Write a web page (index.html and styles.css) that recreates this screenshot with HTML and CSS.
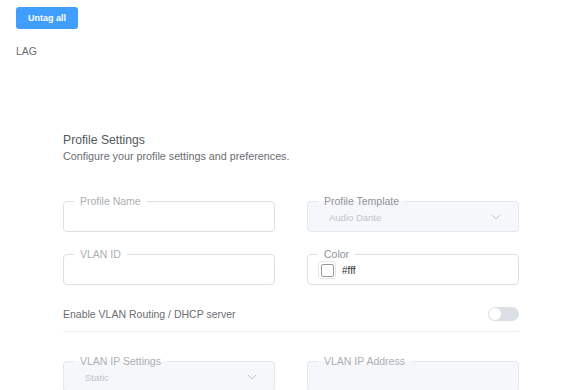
FILE: index.html
```html
<!DOCTYPE html>
<html lang="en">
<head>
    <meta charset="UTF-8">
    <meta name="viewport" content="width=device-width, initial-scale=1.0">
    <title>Profile Settings</title>
    <link rel="stylesheet" href="styles.css">
</head>
<body>

<!-- Top toolbar -->
<div class="toolbar">
    <button class="button">Untag all</button>
    <div class="lag-label">LAG</div>
</div>

<!-- Profile form -->
<div class="profile">
    <div class="profile-head">
        <h3>Profile Settings</h3>
        <p>Configure your profile settings and preferences.</p>
    </div>

    <div class="form-grid">
        <fieldset class="field">
            <legend>Profile Name</legend>
            <input type="text">
        </fieldset>

        <fieldset class="field disabled dark-label">
            <legend>Profile Template</legend>
            <div class="select">
                <span>Audio Dante</span>
                <svg width="10" height="6" viewBox="0 0 10 6"><path d="M1 1l4 4 4-4" fill="none" stroke="#c0c4cc" stroke-width="1"/></svg>
            </div>
        </fieldset>

        <fieldset class="field">
            <legend>VLAN ID</legend>
            <input type="text">
        </fieldset>

        <fieldset class="field dark-label">
            <legend>Color</legend>
            <div class="color-row">
                <span class="swatch"><span></span></span>
                <span class="color-value">#fff</span>
            </div>
        </fieldset>
    </div>

    <div class="switch-row">
        <span>Enable VLAN Routing / DHCP server</span>
        <span class="toggle"><span></span></span>
    </div>

    <div class="form-grid lower">
        <fieldset class="field disabled">
            <legend>VLAN IP Settings</legend>
            <div class="select">
                <span>Static</span>
                <svg width="10" height="6" viewBox="0 0 10 6"><path d="M1 1l4 4 4-4" fill="none" stroke="#c0c4cc" stroke-width="1"/></svg>
            </div>
        </fieldset>

        <fieldset class="field disabled">
            <legend>VLAN IP Address</legend>
            <input type="text" disabled>
        </fieldset>
    </div>
</div>

</body>
</html>
```

FILE: styles.css
```css
body {
    font-family: 'Liberation Sans', Arial, sans-serif;
    margin: 0;
    padding: 7px 16px 0;
    color: #6b6d72;
    background-color: #ffffff;
    overflow: hidden;
}

.button {
    background-color: #409eff;
    border: none;
    color: white;
    height: 22px;
    padding: 0 12px;
    font-family: inherit;
    font-size: 9px;
    font-weight: bold;
    border-radius: 3px;
    cursor: pointer;
    display: block;
}

.lag-label {
    margin-top: 15px;
    font-size: 10.5px;
    line-height: 14px;
}

.profile {
    width: 456px;
    margin: 74px 0 0 47px;
}

.profile-head h3 {
    margin: 0;
    font-size: 12.2px;
    line-height: 16px;
    font-weight: normal;
    color: #55575c;
}

.profile-head p {
    margin: 1px 0 0;
    font-size: 10.75px;
    line-height: 14px;
}

.form-grid {
    display: grid;
    grid-template-columns: 1fr 1fr;
    column-gap: 32px;
    row-gap: 16px;
    margin-top: 32px;
}

.form-grid.lower {
    margin-top: 23px;
}

.field {
    margin: 0;
    min-width: 0;
    padding: 0 10px 4px;
    border: 1px solid #dcdfe6;
    border-radius: 4px;
}

.field legend {
    padding: 0 6px;
    font-size: 10.5px;
    line-height: 12px;
    color: #acafb5;
}

.field.dark-label legend {
    color: #909399;
}

.field.disabled {
    background-color: #f5f7fa;
    border-color: #e4e7ed;
}

.field input {
    display: block;
    width: 100%;
    height: 20px;
    border: none;
    padding: 0;
    background: transparent;
    outline: none;
}

.select {
    height: 20px;
    display: flex;
    align-items: center;
    justify-content: space-between;
    padding: 0 7px 0 11px;
    font-size: 9.5px;
    color: #c0c4cc;
}

.color-row {
    height: 20px;
    display: flex;
    align-items: center;
    gap: 6px;
}

.swatch {
    width: 16px;
    height: 16px;
    border: 1px solid #e6e6e6;
    border-radius: 3px;
    display: flex;
    align-items: center;
    justify-content: center;
}

.swatch span {
    width: 11px;
    height: 11px;
    border: 1px solid #999999;
    border-radius: 2px;
    background: #ffffff;
}

.color-value {
    font-size: 10px;
    color: #303133;
}

.switch-row {
    display: flex;
    align-items: center;
    justify-content: space-between;
    padding: 22px 0 10px;
    border-bottom: 1px solid #ebeef5;
    font-size: 10.5px;
    height: 14px;
}

.toggle {
    width: 31px;
    height: 14px;
    border-radius: 7px;
    background-color: #dcdfe6;
    position: relative;
}

.toggle span {
    position: absolute;
    top: 1px;
    left: 1px;
    width: 12px;
    height: 12px;
    border-radius: 50%;
    background: #ffffff;
}
```
